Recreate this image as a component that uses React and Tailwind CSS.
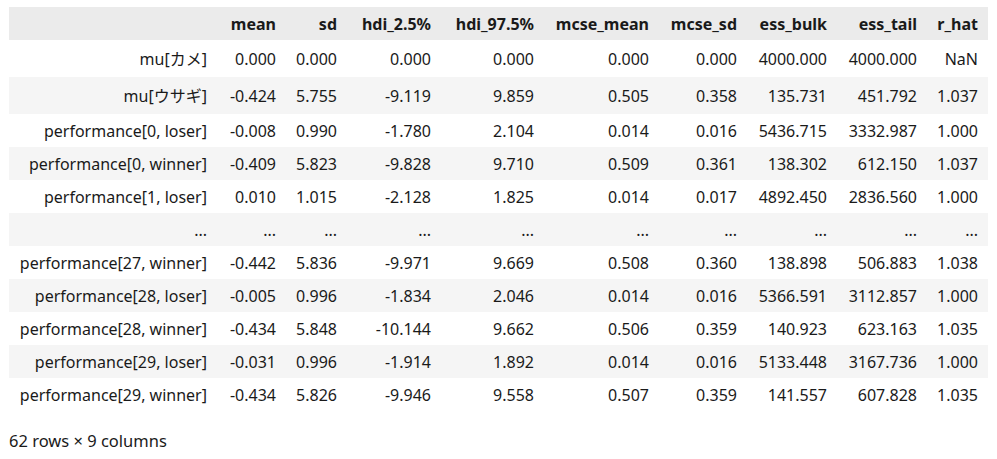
const columns = [
  ["mean", "w-[69px]"],
  ["sd", "w-[61px]"],
  ["hdi_2.5%", "w-[94px]"],
  ["hdi_97.5%", "w-[103px]"],
  ["mcse_mean", "w-[115px]"],
  ["mcse_sd", "w-[88px]"],
  ["ess_bulk", "w-[90px]"],
  ["ess_tail", "w-[90px]"],
  ["r_hat", "w-[61px]"],
];

const rows = [
  ["mu[カメ]", "0.000", "0.000", "0.000", "0.000", "0.000", "0.000", "4000.000", "4000.000", "NaN"],
  ["mu[ウサギ]", "-0.424", "5.755", "-9.119", "9.859", "0.505", "0.358", "135.731", "451.792", "1.037"],
  ["performance[0, loser]", "-0.008", "0.990", "-1.780", "2.104", "0.014", "0.016", "5436.715", "3332.987", "1.000"],
  ["performance[0, winner]", "-0.409", "5.823", "-9.828", "9.710", "0.509", "0.361", "138.302", "612.150", "1.037"],
  ["performance[1, loser]", "0.010", "1.015", "-2.128", "1.825", "0.014", "0.017", "4892.450", "2836.560", "1.000"],
  ["...", "...", "...", "...", "...", "...", "...", "...", "...", "..."],
  ["performance[27, winner]", "-0.442", "5.836", "-9.971", "9.669", "0.508", "0.360", "138.898", "506.883", "1.038"],
  ["performance[28, loser]", "-0.005", "0.996", "-1.834", "2.046", "0.014", "0.016", "5366.591", "3112.857", "1.000"],
  ["performance[28, winner]", "-0.434", "5.848", "-10.144", "9.662", "0.506", "0.359", "140.923", "623.163", "1.035"],
  ["performance[29, loser]", "-0.031", "0.996", "-1.914", "1.892", "0.014", "0.016", "5133.448", "3167.736", "1.000"],
  ["performance[29, winner]", "-0.434", "5.826", "-9.946", "9.558", "0.507", "0.359", "141.557", "607.828", "1.035"],
];

export default function App() {
  return (
    <div
      className="bg-white text-[#1a1a1a] px-[9px] pt-[7px]"
      style={{ fontFamily: '"Noto Sans", "Noto Sans CJK JP", sans-serif' }}
    >
      <table className="border-collapse table-fixed w-[979px] text-[16px]">
        <thead>
          <tr className="bg-[#ebebeb] h-[33px]">
            <th className="w-[208px]"></th>
            {columns.map(([name, w]) => (
              <th key={name} className={`${w} text-right font-bold pr-[10px] whitespace-nowrap leading-none`}>
                {name}
              </th>
            ))}
          </tr>
        </thead>
        <tbody>
          {rows.map((row, i) => (
            <tr
              key={i}
              className={`${i % 2 === 1 ? "bg-[#f5f5f5]" : "bg-white"} ${i < 2 ? "h-[37px]" : "h-[33px]"}`}
            >
              {row.map((cell, j) => (
                <td key={j} className="text-right pr-[10px] whitespace-nowrap leading-none">
                  {cell}
                </td>
              ))}
            </tr>
          ))}
        </tbody>
      </table>
      <p className="mt-[17px] text-[16.5px] leading-[25px]">62 rows × 9 columns</p>
    </div>
  );
}
